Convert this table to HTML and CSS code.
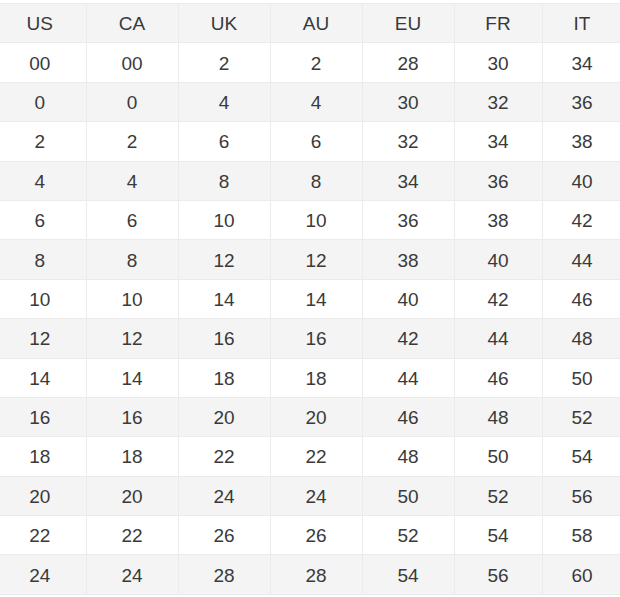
FILE: index.html
```html
<!DOCTYPE html>
<html>
<head>
<meta charset="utf-8">
<link rel="stylesheet" href="styles.css">
</head>
<body>
<table class="size-table">
<colgroup>
<col class="c1"><col class="c2"><col class="c3"><col class="c4"><col class="c5"><col class="c6"><col class="c7">
</colgroup>
<thead>
<tr><th>US</th><th>CA</th><th>UK</th><th>AU</th><th>EU</th><th>FR</th><th>IT</th></tr>
</thead>
<tbody>
<tr><td>00</td><td>00</td><td>2</td><td>2</td><td>28</td><td>30</td><td>34</td></tr>
<tr><td>0</td><td>0</td><td>4</td><td>4</td><td>30</td><td>32</td><td>36</td></tr>
<tr><td>2</td><td>2</td><td>6</td><td>6</td><td>32</td><td>34</td><td>38</td></tr>
<tr><td>4</td><td>4</td><td>8</td><td>8</td><td>34</td><td>36</td><td>40</td></tr>
<tr><td>6</td><td>6</td><td>10</td><td>10</td><td>36</td><td>38</td><td>42</td></tr>
<tr><td>8</td><td>8</td><td>12</td><td>12</td><td>38</td><td>40</td><td>44</td></tr>
<tr><td>10</td><td>10</td><td>14</td><td>14</td><td>40</td><td>42</td><td>46</td></tr>
<tr><td>12</td><td>12</td><td>16</td><td>16</td><td>42</td><td>44</td><td>48</td></tr>
<tr><td>14</td><td>14</td><td>18</td><td>18</td><td>44</td><td>46</td><td>50</td></tr>
<tr><td>16</td><td>16</td><td>20</td><td>20</td><td>46</td><td>48</td><td>52</td></tr>
<tr><td>18</td><td>18</td><td>22</td><td>22</td><td>48</td><td>50</td><td>54</td></tr>
<tr><td>20</td><td>20</td><td>24</td><td>24</td><td>50</td><td>52</td><td>56</td></tr>
<tr><td>22</td><td>22</td><td>26</td><td>26</td><td>52</td><td>54</td><td>58</td></tr>
<tr><td>24</td><td>24</td><td>28</td><td>28</td><td>54</td><td>56</td><td>60</td></tr>
</tbody>
</table>
</body>
</html>
```
FILE: styles.css
```css
html, body {
  margin: 0;
  padding: 0;
  background: #ffffff;
}
body {
  padding-top: 3px;
  overflow: hidden;
}
.size-table {
  border-collapse: collapse;
  table-layout: fixed;
  width: 628px;
  margin-left: -6px;
  font-family: "Liberation Sans", Arial, sans-serif;
  font-size: 19px;
  color: #3a3a3a;
}
.c1 { width: 92px; }
.c2 { width: 92px; }
.c3 { width: 92px; }
.c4 { width: 92px; }
.c5 { width: 92px; }
.c6 { width: 88px; }
.c7 { width: 80px; }
.size-table th,
.size-table td {
  height: 39.4px;
  padding: 2px 0 0 0;
  text-align: center;
  vertical-align: middle;
  border: 1px solid #ebebeb;
  font-weight: normal;
  box-sizing: border-box;
}
.size-table tr > :first-child {
  border-left: none;
}
.size-table thead th {
  background: #f4f4f4;
}
.size-table tbody tr:nth-child(even) td {
  background: #f4f4f4;
}
```
